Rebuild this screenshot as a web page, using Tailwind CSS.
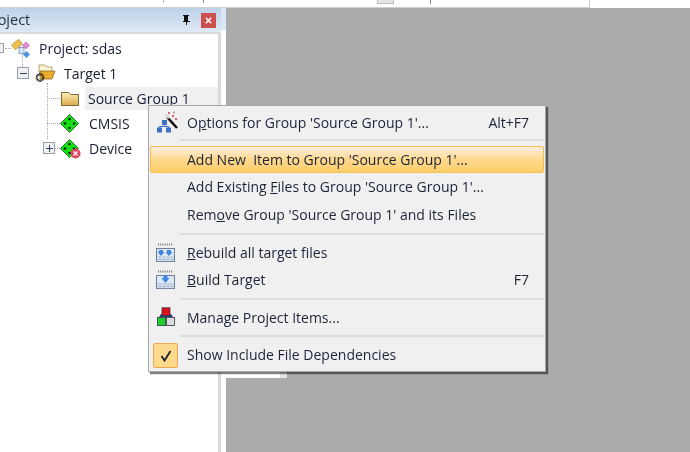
<!DOCTYPE html>
<html>
<head>
<meta charset="utf-8">
<script src="https://cdn.jsdelivr.net/npm/@tailwindcss/browser@4"></script>
</head>
<body class="m-0">
<div class="relative w-[690px] h-[452px] overflow-hidden bg-white font-['Open_Sans',sans-serif] text-[14px] text-[#171e33] blur-[0.35px]">
  <!-- top toolbar strip -->
  <div class="flex h-[8px] bg-white">
    <div class="w-[590px] h-[8px] border-b border-r border-[#cfcfcf] flex items-start">
      <div class="ml-[163px] w-px h-[3px] bg-[#bbb]"></div>
      <div class="ml-[39px] w-px h-[3px] bg-[#888]"></div>
      <div class="ml-[173px] w-[17px] h-[4px] bg-[#e6e6e6] border-b border-x border-[#bdbdbd]"></div>
      <div class="ml-[36px] w-px h-[4px] bg-[#888]"></div>
    </div>
  </div>
  <div class="flex h-[444px]">
    <!-- project panel -->
    <div class="w-[221px] shrink-0 flex flex-col bg-white">
      <div class="h-[24px] shrink-0 pr-[5px] flex items-center bg-gradient-to-b from-[#bdd1e8] to-[#dfe9f5] overflow-hidden">
        <span class="ml-[-17px] text-[14.500px] leading-none text-[#2a3040]">Project</span>
        <svg class="ml-auto w-[12px] h-[12px]" viewBox="0 0 12 12"><path d="M3 1h6v1H8v5h2v1H7v3H6V8H3V7h1V2H3z" fill="#111"/></svg>
        <div class="ml-[9px] w-[15px] h-[15px] bg-[#cd4f50] flex items-center justify-center">
          <svg class="w-[7px] h-[7px]" viewBox="0 0 7 7"><path d="M.8.800l5.400 5.400m0-5.400L.8 6.200" stroke="#fff" stroke-width="1.500"/></svg>
        </div>
      </div>
      <div class="flex-1 bg-white border-t-2 border-r-[3px] border-[#d9d9d9] pt-[2px]">
        <div class="relative h-[25px] flex items-center pl-[10px]">
          <div class="absolute left-[-6px] top-[7px] w-[10px] h-[10px] border border-[#9aa0a8] bg-[#eef0f4]"></div>
          <div class="absolute left-[5px] top-[12px] w-[6px] border-t border-dotted border-[#aaa]"></div>
          <svg class="w-[21px] h-[20px] shrink-0" viewBox="0 0 21 20"><rect x="2.500" y="2.500" width="9" height="6" fill="#eec04c" stroke="#a98326" stroke-width=".6" transform="rotate(-38 7 5.500)"/><rect x="13.500" y="4" width="5" height="5" fill="#e789d6" stroke="#a652a0" stroke-width=".5" transform="rotate(45 16 6.500)"/><rect x="14" y="13" width="5" height="5" fill="#4f8fe0" transform="rotate(45 16.500 15.500)"/><rect x="9" y="8.500" width="5" height="6" fill="#d7e6f6" stroke="#5a7ea8" stroke-width=".7"/></svg>
          <span class="ml-[8px]">Project: sdas</span>
        </div>
        <div class="relative h-[25px] flex items-center pl-[35px]">
          <div class="absolute left-[22px] top-[-6px] h-[12px] border-l border-dotted border-[#aaa]"></div>
          <div class="absolute left-[17px] top-[6px] w-[12px] h-[12px] border border-[#9aa0a8] bg-[#eef0f4] flex items-center justify-center"><div class="w-[7px] h-px bg-[#333d66]"></div></div>
          <svg class="w-[21px] h-[19px] shrink-0" viewBox="0 0 21 19"><path d="M4 1h6l2 2h5v5H4z" fill="#fff6d8" stroke="#9b8140" stroke-width=".7"/><path d="M5 7h15l-3 8H5z" fill="#e8ac2c" stroke="#7d5c16" stroke-width=".7"/><circle cx="5" cy="13.500" r="3.300" fill="none" stroke="#111" stroke-width="2.200" stroke-dasharray="1.200 .6"/></svg>
          <span class="ml-[8px]">Target 1</span>
        </div>
        <div class="relative h-[25px] flex items-center pl-[61px]">
          <div class="absolute left-[47px] top-[-3px] h-[56px] border-l border-dotted border-[#aaa]"></div>
          <div class="absolute left-[47px] top-[12px] w-[13px] border-t border-dotted border-[#aaa]"></div>
          <svg class="w-[18px] h-[15px] shrink-0" viewBox="0 0 18 15"><defs><linearGradient id="f" x1="0" x2="0" y1="0" y2="1"><stop offset="0" stop-color="#fdf0b8"/><stop offset="1" stop-color="#dca94a"/></linearGradient></defs><path d="M.5 1.500h7l2 2h8v11H.5z" fill="url(#f)" stroke="#7d6a36"/></svg>
          <span class="ml-[6px] w-[133px] h-[23px] flex items-center pl-[3px] bg-[#f0f0f0] shrink-0">Source Group 1</span>
        </div>
        <div class="relative h-[25px] flex items-center pl-[60px]">
          <div class="absolute left-[47px] top-[12px] w-[13px] border-t border-dotted border-[#aaa]"></div>
          <svg class="w-[19px] h-[19px] shrink-0" viewBox="0 0 19 19"><path d="M9.500 .500L18.500 9.500 9.500 18.500 .5 9.500z" fill="#16e016" stroke="#0b5c0b" stroke-width=".8"/><circle cx="9.500" cy="5" r="1.300" fill="#021"/><circle cx="5" cy="9.500" r="1.300" fill="#021"/><circle cx="14" cy="9.500" r="1.300" fill="#021"/><circle cx="9.500" cy="14" r="1.300" fill="#021"/></svg>
          <span class="ml-[10px]">CMSIS</span>
        </div>
        <div class="relative h-[25px] flex items-center pl-[60px]">
          <div class="absolute left-[43px] top-[6px] w-[12px] h-[12px] border border-[#9aa0a8] bg-[#eef0f4] flex items-center justify-center">
            <svg class="w-[7px] h-[7px]" viewBox="0 0 7 7"><path d="M0 3.500h7M3.500 0v7" stroke="#333d66"/></svg>
          </div>
          <div class="absolute left-[55px] top-[12px] w-[5px] border-t border-dotted border-[#aaa]"></div>
          <div class="relative w-[19px] h-[19px] shrink-0">
            <svg class="w-[19px] h-[19px]" viewBox="0 0 19 19"><path d="M9.500 .500L18.500 9.500 9.500 18.500 .5 9.500z" fill="#16e016" stroke="#0b5c0b" stroke-width=".8"/><circle cx="9.500" cy="5" r="1.300" fill="#021"/><circle cx="5" cy="9.500" r="1.300" fill="#021"/><circle cx="14" cy="9.500" r="1.300" fill="#021"/><circle cx="9.500" cy="14" r="1.300" fill="#021"/></svg>
            <svg class="absolute left-[10px] top-[9px] w-[11px] h-[11px]" viewBox="0 0 11 11"><circle cx="5.500" cy="5.500" r="5" fill="#e0455c"/><path d="M3.500 3.500l4 4m0-4l-4 4" stroke="#fff" stroke-width="1.200"/></svg>
          </div>
          <span class="ml-[10px]">Device</span>
        </div>
      </div>
    </div>
    <div class="w-[5px] shrink-0 bg-white">
      <div class="h-[22px] bg-[#dbe7f6]"></div>
    </div>
    <div class="flex-1 bg-[#ababab]"></div>
  </div>

  <!-- remnant strip below the menu -->
  <div class="absolute left-[226px] top-[372px] flex h-[6px]">
    <div class="w-[54px] bg-white"></div>
    <div class="w-[7px] bg-[#e4e4e4]"></div>
  </div>

  <!-- context menu -->
  <div class="absolute left-[148px] top-[105px] w-[398px] h-[267px] bg-[#f0f0f0] border border-[#a8a8a8] shadow-[2px_2px_1px_rgba(0,0,0,0.5)] pt-[3px] px-[1px] text-[#1c2438]">
    <div class="flex items-center h-[27px] pl-[37px] pr-[15px] relative">
      <svg class="absolute left-[5px] top-[2px] w-[23px] h-[22px]" viewBox="0 0 23 22"><path d="M12 6l10 11" stroke="#111" stroke-width="2.600"/><path d="M10 5l2-2 3 3-2 2z" fill="#d8d8d8"/><circle cx="14" cy="2" r="1" fill="#d33"/><circle cx="18" cy="5" r="1" fill="#d33"/><circle cx="19" cy="1.500" r="1" fill="#a88"/><circle cx="21" cy="8" r="1" fill="#d33"/><rect x="7" y="9" width="5" height="5" fill="#3d71c4"/><rect x="2" y="16.500" width="5" height="5" fill="#3d71c4"/><rect x="11" y="16.500" width="5" height="5" fill="#3d71c4"/><path d="M9.500 13v2.500H4.500V17m5-1.500h4V17" fill="none" stroke="#3d71c4"/></svg>
      <span>O<span class="underline">p</span>tions for Group 'Source Group 1'...</span><span class="ml-auto">Alt+F7</span>
    </div>
    <div class="ml-[30px] h-[2px] mt-[3px] bg-[#dedede]"></div>
    <div class="mt-[5px] h-[27px] flex items-center pl-[36px] rounded-[2px] border border-[#f2c04f] bg-gradient-to-b from-[#fdeee0] via-[#fdd98e] to-[#fdcd68]">Add New &nbsp;Item to Group 'Source Group 1'...</div>
    <div class="h-[27px] mt-[1px] pb-[2px] flex items-center pl-[37px]"><span>Add Existing <span class="underline">F</span>iles to Group 'Source Group 1'...</span></div>
    <div class="h-[29px] pb-[2px] flex items-center pl-[37px]"><span>Rem<span class="underline">o</span>ve Group 'Source Group 1' and its Files</span></div>
    <div class="ml-[30px] h-[2px] mt-[3px] bg-[#dedede]"></div>
    <div class="mt-[5px] h-[27px] pb-[2px] flex items-center pl-[37px] relative">
      <svg class="absolute left-[5px] top-[3px] w-[21px] h-[20px]" viewBox="0 0 21 20"><rect x="1.500" y="5.500" width="18" height="13" fill="#dfe9f5" stroke="#6d7f96"/><path d="M2 14h17M2 16.500h17M5 14v5M9 14v5M13 14v5M17 14v5" stroke="#9db2cc" stroke-width=".7"/><path d="M4 7h4v2h1.500L6 13 2.500 9H4zM12 7h4v2h1.500L14 13l-3.500-4H12z" fill="#3f84e6"/><path d="M3 1.500h15" stroke="#777" stroke-dasharray="1 1.200" stroke-width="2"/></svg>
      <span><span class="underline">R</span>ebuild all target files</span>
    </div>
    <div class="h-[27px] pb-[2px] flex items-center pl-[37px] pr-[15px] relative">
      <svg class="absolute left-[5px] top-[3px] w-[21px] h-[20px]" viewBox="0 0 21 20"><rect x="1.500" y="5.500" width="18" height="13" fill="#dfe9f5" stroke="#6d7f96"/><path d="M2 14h17M2 16.500h17M5 14v5M9 14v5M13 14v5M17 14v5" stroke="#9db2cc" stroke-width=".7"/><path d="M8.500 5h4v3h2L10.500 13l-4-5h2z" fill="#3f84e6"/><path d="M3 1.500h15" stroke="#777" stroke-dasharray="1 1.200" stroke-width="2"/></svg>
      <span><span class="underline">B</span>uild Target</span><span class="ml-auto">F7</span>
    </div>
    <div class="ml-[30px] h-[2px] mt-[4px] bg-[#dedede]"></div>
    <div class="mt-[5px] h-[27px] pb-[2px] flex items-center pl-[37px] relative">
      <svg class="absolute left-[6px] top-[2px] w-[20px] h-[20px]" viewBox="0 0 20 20"><path d="M3 10l2-3h10l2 3z" fill="#24407a"/><rect x="6" y=".8" width="8" height="7.700" fill="#e0101c" stroke="#334" stroke-width=".8"/><rect x="1.500" y="10.500" width="8" height="8" fill="#1fd02c" stroke="#334" stroke-width=".8"/><rect x="10.500" y="10.500" width="8" height="8" fill="#dcdcdc" stroke="#334" stroke-width=".8"/></svg>
      <span>Manage Project Items...</span>
    </div>
    <div class="ml-[30px] h-[2px] mt-[3px] bg-[#dedede]"></div>
    <div class="mt-[5px] h-[27px] pb-[2px] flex items-center pl-[37px] relative">
      <div class="absolute left-[3px] top-[1px] w-[25px] h-[25px] rounded-[2px] border border-[#f2a64d] bg-[#fdda8c] flex items-center justify-center">
        <svg class="w-[14px] h-[14px]" viewBox="0 0 14 14"><path d="M2.500 7l3 4.500L11.500 2" fill="none" stroke="#1c2230" stroke-width="1.800"/></svg>
      </div>
      <span>Show Include File Dependencies</span>
    </div>
  </div>
</div>
</body>
</html>
